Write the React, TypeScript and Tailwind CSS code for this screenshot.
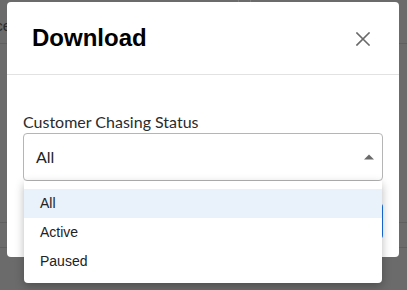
import { useState } from "react";

const options = ["All", "Active", "Paused"];

export default function App() {
  const [value] = useState("All");

  return (
    <div className="relative h-[290px] w-full overflow-hidden bg-[#6b6b6b]">
      {/* page behind the overlay */}
      <div className="flex flex-col">
        <div className="flex h-[44px] border-b border-[#5f5f5f]">
          <div className="flex w-[11px] justify-end overflow-hidden pt-[15px] text-[15px] text-[#2a2a2a] [font-family:'Liberation_Sans',Arial,sans-serif]">
            <span className="whitespace-nowrap">Balance</span>
          </div>
          <div className="w-[227px]" />
          <div className="w-[12px] border-l border-[#7d7d7d]" />
          <div className="flex-1 border-l border-[#7d7d7d]" />
        </div>
        <div className="h-[179px] border-b border-[#5f5f5f]" />
        <div className="h-[25px] border-b border-[#5f5f5f]" />
      </div>

      {/* modal */}
      <div className="absolute left-[7px] top-[2px] w-[392px] rounded-[4px] bg-white">
        <div className="flex h-[73px] items-center justify-between border-b border-[#e2e2e2] pl-[25px] pr-[29px]">
          <h2 className="text-[24px] font-bold leading-[28px] text-black [font-family:'Liberation_Sans',Arial,sans-serif]">Download</h2>
          <svg width="14" height="14" viewBox="0 0 14 14" className="mt-[1px]">
            <path d="M1 1L13 13M13 1L1 13" stroke="#6a6a6a" strokeWidth="1.6" strokeLinecap="square" />
          </svg>
        </div>

        <div className="flex flex-col px-[16px] pb-[18px] pt-[37px]">
          <label className="text-[16px] leading-[20px] text-[#2b2b2b] [font-family:Lato,sans-serif]">Customer Chasing Status</label>
          <div className="relative mt-[1px]">
            <div className="flex h-[48px] items-center justify-between rounded-[4px] border border-[#b5b5b5] pl-[12px] pr-[8px] text-[16px] text-[#222] [font-family:Lato,sans-serif]">
              <span>{value}</span>
              <svg width="10" height="6" viewBox="0 0 10 6">
                <path d="M0 5.5L5 0.5L10 5.5Z" fill="#6a6a6a" />
              </svg>
            </div>

            <ul className="absolute left-[1px] top-[48px] z-10 w-[358px] rounded-b-[4px] bg-white pb-[7px] pt-[8px] shadow-[0_3px_10px_rgba(0,0,0,0.28)] [font-family:'Liberation_Sans',Arial,sans-serif]">
              {options.map((o) => (
                <li
                  key={o}
                  className={`flex h-[29px] items-center pl-[16px] text-[14px] text-[#222] ${o === value ? "bg-[#e9f1fa]" : ""}`}
                >
                  {o}
                </li>
              ))}
            </ul>
          </div>

          <div className="mt-[22px] flex justify-end">
            <button className="h-[36px] w-[110px] rounded-[4px] bg-[#1a73e8] text-[14px] text-white">Download</button>
          </div>
        </div>
      </div>
    </div>
  );
}
